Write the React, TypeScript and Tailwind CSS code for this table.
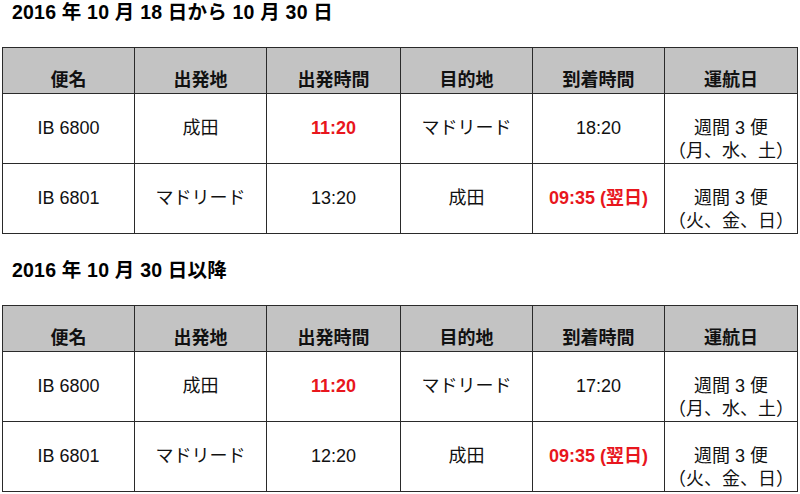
import React from "react";

type Cell = { text: string[]; red?: boolean };

interface Schedule {
  title: string;
  rows: Cell[][];
}

const headers = ["便名", "出発地", "出発時間", "目的地", "到着時間", "運航日"];

const schedules: Schedule[] = [
  {
    title: "2016 年 10 月 18 日から 10 月 30 日",
    rows: [
      [
        { text: ["IB 6800"] },
        { text: ["成田"] },
        { text: ["11:20"], red: true },
        { text: ["マドリード"] },
        { text: ["18:20"] },
        { text: ["週間 3 便", "（月、水、土）"] },
      ],
      [
        { text: ["IB 6801"] },
        { text: ["マドリード"] },
        { text: ["13:20"] },
        { text: ["成田"] },
        { text: ["09:35 (翌日)"], red: true },
        { text: ["週間 3 便", "（火、金、日）"] },
      ],
    ],
  },
  {
    title: "2016 年 10 月 30 日以降",
    rows: [
      [
        { text: ["IB 6800"] },
        { text: ["成田"] },
        { text: ["11:20"], red: true },
        { text: ["マドリード"] },
        { text: ["17:20"] },
        { text: ["週間 3 便", "（月、水、土）"] },
      ],
      [
        { text: ["IB 6801"] },
        { text: ["マドリード"] },
        { text: ["12:20"] },
        { text: ["成田"] },
        { text: ["09:35 (翌日)"], red: true },
        { text: ["週間 3 便", "（火、金、日）"] },
      ],
    ],
  },
];

const font = { fontFamily: '"Liberation Sans", "Noto Sans CJK JP", sans-serif' };

const ScheduleTable: React.FC<{ schedule: Schedule; first?: boolean }> = ({ schedule, first }) => (
  <section className={first ? "" : "mt-[24px]"}>
    {/* 期間タイトル */}
    <h2 className="pl-[12px] text-[19.5px] leading-[25px] font-bold text-black tracking-[0.2px]">
      {schedule.title}
    </h2>

    <div className="mt-[22px] ml-[2px] w-[796px] grid grid-cols-[132px_132px_134px_132px_132px_133px] border-l border-t border-[#2a2a2a]">
      {headers.map((h) => (
        <div
          key={h}
          className="h-[46px] bg-[#c3c3c3] border-r border-b border-[#2a2a2a] pt-[21px] text-center text-[18px] leading-[23px] font-bold text-[#111]"
        >
          {h}
        </div>
      ))}
      {schedule.rows.map((row, ri) =>
        row.map((cell, ci) => (
          <div
            key={`${ri}-${ci}`}
            className={`h-[70px] border-r border-b border-[#2a2a2a] pt-[23px] text-center text-[18px] leading-[23px] ${
              cell.red ? "text-[#e8161d] font-bold" : "text-[#111]"
            }`}
          >
            {cell.text.map((t) => (
              <div key={t}>{t}</div>
            ))}
          </div>
        ))
      )}
    </div>
  </section>
);

export default function App() {
  return (
    <div className="w-[800px] h-[494px] bg-white overflow-hidden" style={font}>
      {schedules.map((s, i) => (
        <ScheduleTable key={s.title} schedule={s} first={i === 0} />
      ))}
    </div>
  );
}
